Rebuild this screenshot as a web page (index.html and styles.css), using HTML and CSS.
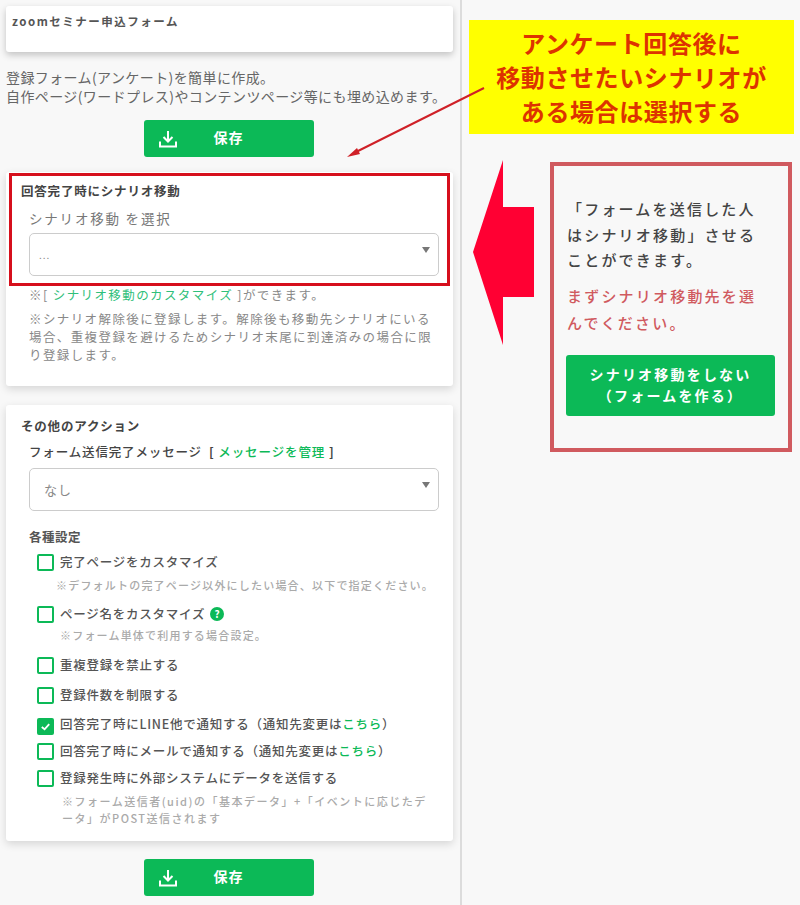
FILE: index.html
```html
<!DOCTYPE html>
<html lang="ja">
<head>
<meta charset="utf-8">
<title>zoomセミナー申込フォーム</title>
<link rel="stylesheet" href="styles.css">
</head>
<body>
<div class="page">
  <main class="form-col">
    <section class="card title-card"><h1>zoomセミナー申込フォーム</h1></section>
    <p class="intro">登録フォーム(アンケート)を簡単に作成。<br>自作ページ(ワードプレス)やコンテンツページ等にも埋め込めます。</p>
    <div class="save-wrap">
      <button class="save"><svg class="dl" viewBox="0 0 20 20"><path d="M10 2v10M5.500 8l4.500 4.500L14.500 8M2 12.500v5h16v-5" fill="none" stroke="#fff" stroke-width="2"/></svg><span>保存</span></button>
    </div>
    <section class="card scenario-card">
      <h2>回答完了時にシナリオ移動</h2>
      <div class="inner">
        <div class="sel-label">シナリオ移動 を選択</div>
        <div class="select small"><span>...</span></div>
        <p class="note first">※[ <a>シナリオ移動のカスタマイズ</a> ]ができます。</p>
        <p class="note">※シナリオ解除後に登録します。解除後も移動先シナリオにいる場合、重複登録を避けるためシナリオ末尾に到達済みの場合に限り登録します。</p>
      </div>
    </section>
    <section class="card other-card">
      <h2>その他のアクション</h2>
      <div class="inner">
        <div class="msg-label">フォーム送信完了メッセージ<span class="bracket">[ <a>メッセージを管理</a> ]</span></div>
        <div class="select"><span>なし</span></div>
        <h3>各種設定</h3>
        <ul class="checks">
          <li class="g1"><i class="box"></i>完了ページをカスタマイズ<small class="hint h1">※デフォルトの完了ページ以外にしたい場合、以下で指定ください。</small></li>
          <li class="g2"><i class="box"></i>ページ名をカスタマイズ<b class="help">?</b><small class="hint h2">※フォーム単体で利用する場合設定。</small></li>
          <li class="g3"><i class="box"></i>重複登録を禁止する</li>
          <li class="g4"><i class="box"></i>登録件数を制限する</li>
          <li class="g5"><i class="box on"><svg viewBox="0 0 14 14"><path d="M3 7.500l3 2.500 5-5.500" fill="none" stroke="#fff" stroke-width="2"/></svg></i>回答完了時にLINE他で通知する（通知先変更は<a>こちら</a>）</li>
          <li class="g6"><i class="box"></i>回答完了時にメールで通知する（通知先変更は<a>こちら</a>）</li>
          <li class="g7"><i class="box"></i>登録発生時に外部システムにデータを送信する<small class="hint h3">※フォーム送信者(uid)の「基本データ」+「イベントに応じたデータ」がPOST送信されます</small></li>
        </ul>
      </div>
    </section>
    <div class="save-wrap bottom">
      <button class="save"><svg class="dl" viewBox="0 0 20 20"><path d="M10 2v10M5.500 8l4.500 4.500L14.500 8M2 12.500v5h16v-5" fill="none" stroke="#fff" stroke-width="2"/></svg><span>保存</span></button>
    </div>
  </main>
  <aside class="callout">アンケート回答後に<br>移動させたいシナリオが<br>ある場合は選択する</aside>
  <div class="red-frame"></div>
  <svg class="marks" viewBox="0 0 800 905">
    <path d="M484 88L354 153" stroke="#cf2027" stroke-width="2" fill="none"/>
    <path d="M347 157l10-9 3 6z" fill="#cf2027"/>
    <path d="M503 160L473 252L503 345V297H534V207H503Z" fill="#ff0033"/>
  </svg>
  <aside class="panel">
    <p class="panel-text">「フォームを送信した人はシナリオ移動」させることができます。</p>
    <p class="panel-warn">まずシナリオ移動先を選んでください。</p>
    <button class="panel-btn">シナリオ移動をしない<br>（フォームを作る）</button>
  </aside>
</div>
</body>
</html>
```
FILE: styles.css
```css
* { box-sizing: border-box; }
html, body { margin: 0; padding: 0; }
body { background: #f8f8f8; font-family: "Noto Sans CJK JP", "Noto Sans", sans-serif; color: #444; }
.page { position: relative; width: 800px; height: 905px; overflow: hidden; }
.form-col { width: 462px; height: 905px; padding: 6px 8px 0 6px; border-right: 2px solid #dcdcdc; }
.card { background: #fff; width: 447px; border-radius: 3px; box-shadow: 0 3px 7px rgba(0,0,0,.22); }
.title-card { height: 46px; padding: 7px 6px 0; }
h1 { margin: 0; font-size: 11.500px; line-height: 16px; font-weight: 700; color: #555; letter-spacing: 1.500px; }
.intro { margin: 16px 0 0; font-size: 14px; line-height: 19px; color: #666; white-space: nowrap; letter-spacing: .4px; }
.save-wrap { display: flex; justify-content: center; margin: 14px 0 0; padding-right: 1px; }
.save { display: flex; align-items: center; width: 170px; height: 37px; padding: 0 0 4px 14px; border: 0; border-radius: 3px; background: #0cb957; color: #fff; font: 700 14px/1 "Noto Sans CJK JP", sans-serif; letter-spacing: 1px; }
.dl { width: 20px; height: 20px; margin: 4px 36px 0 0; }
.scenario-card { height: 214px; margin-top: 15px; padding: 10px 15px 0; box-shadow: 0 3px 9px rgba(0,0,0,.14); }
h2 { margin: 0; font-size: 12.500px; line-height: 18px; font-weight: 700; color: #444; letter-spacing: .8px; }
.inner { padding: 0 0 0 8px; }
.sel-label { margin-top: 9px; font-size: 13.500px; line-height: 18px; color: #777; letter-spacing: 1.800px; }
.select { position: relative; width: 410px; height: 43px; margin-top: 6px; padding: 11px 15px 0 14px; border: 1px solid #ccc; border-radius: 5px; background: #fff; font-size: 13px; line-height: 20px; color: #888; letter-spacing: 1px; }
.select::after { content: ""; position: absolute; right: 8px; top: 13px; border: 4.500px solid transparent; border-top: 6px solid #777; border-bottom: 0; }
.select.small { padding-left: 9px; font-size: 10px; }
.note { margin: 0; width: 410px; font-size: 12.500px; line-height: 18px; color: #888; letter-spacing: 1.400px; }
.note.first { margin: 10px 0 6px; }
a { color: #0cb957; font-weight: 500; }
.note a { color: #2fc07a; font-weight: 400; }
.other-card { height: 436px; margin-top: 19px; padding: 12px 15px 0; box-shadow: 0 3px 9px rgba(0,0,0,.14); }
.msg-label { margin-top: 8px; font-size: 12.500px; line-height: 18px; font-weight: 500; color: #444; letter-spacing: .85px; }
.bracket { margin-left: 7px; font-weight: 700; letter-spacing: .9px; }
.other-card .select { margin-top: 7px; }
.other-card .select span { font-size: 13px; }
h3 { margin: 17px 0 0; font-size: 12.500px; line-height: 18px; font-weight: 700; color: #555; letter-spacing: .5px; }
.checks { list-style: none; margin: 7px 0 0; padding: 0 0 0 8px; font-size: 12.500px; font-weight: 500; color: #555; letter-spacing: .75px; }
.checks li { position: relative; line-height: 18px; }
.g1 { height: 52px; } .g2 { height: 51px; } .g3 { height: 30px; } .g4 { height: 29px; } .g5 { height: 27px; } .g6 { height: 27px; }
.box { display: inline-flex; vertical-align: -4px; width: 17px; height: 17px; margin-right: 6px; border: 2px solid #0cb957; border-radius: 2px; background: #fff; }
.box.on { background: #0cb957; }
.box.on svg { width: 13px; height: 13px; }
.help { display: inline-block; width: 14px; height: 14px; margin-left: 5px; border-radius: 50%; background: #0cb957; color: #fff; font-size: 10px; line-height: 14px; text-align: center; vertical-align: 1px; letter-spacing: 0; }
.hint { display: block; font-size: 11px; line-height: 17px; font-weight: 500; color: #aaa; letter-spacing: 1.200px; }
.h1 { margin: 6px 0 0 19px; white-space: nowrap; }
.h2 { margin: 4px 0 0 23px; }
.h3 { width: 372px; margin: 6px 0 0 25px; letter-spacing: 1.500px; line-break: loose; }
.bottom { margin-top: 18px; }
.callout { position: absolute; left: 469px; top: 20px; width: 325px; height: 114px; padding-top: 6px; background: #ffff00; color: #dd3300; font-size: 24px; line-height: 34px; font-weight: 700; text-align: center; letter-spacing: .6px; }
.red-frame { position: absolute; left: 9px; top: 173px; width: 441px; height: 113px; border: 3px solid #d60f1c; }
.marks { position: absolute; left: 0; top: 0; width: 800px; height: 905px; pointer-events: none; }
.panel { position: absolute; left: 550px; top: 162px; width: 242px; height: 290px; padding: 30px 12px 0 13px; border: 4px solid #d05a5f; }
.panel p { margin: 0; width: 200px; font-size: 15px; font-weight: 500; letter-spacing: 2.200px; }
.panel-text { line-height: 25.500px; color: #444; }
.panel-warn { margin-top: 9px !important; line-height: 27px; color: #d05a5f; }
.panel-btn { display: block; width: 209px; height: 61px; margin: 19px 0 0 -1px; border: 0; border-radius: 3px; background: #0cb957; color: #fff; font: 700 14px/21px "Noto Sans CJK JP", sans-serif; letter-spacing: 2.200px; }
```
